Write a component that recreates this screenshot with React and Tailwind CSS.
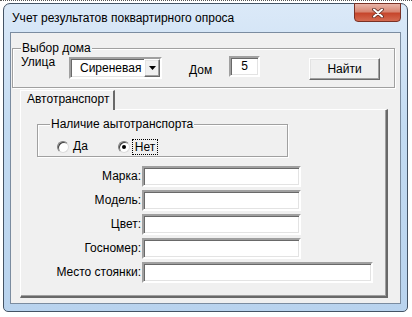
import React from 'react';

const sunken =
  'border-2 border-t-[#a0a0a0] border-l-[#a0a0a0] border-b-white border-r-white shadow-[inset_1px_1px_0_#696969,inset_-1px_-1px_0_#e3e3e3] bg-white';
const raised =
  'border border-t-white border-l-white border-b-[#696969] border-r-[#696969] shadow-[inset_-1px_-1px_0_#a0a0a0,inset_1px_1px_0_#e3e3e3] bg-[#f0f0f0]';
const etched =
  'border border-[#a0a0a0] shadow-[inset_1px_1px_0_white,1px_1px_0_white]';

function Field({ label, wide }) {
  return (
    <div className="flex items-center h-[21px]">
      <span className="w-[121px] text-right pr-px">{label}</span>
      <div className={`${sunken} h-[21px] ${wide ? 'w-[231px]' : 'w-[159px]'}`} />
    </div>
  );
}

function Radio({ checked }) {
  return (
    <div className="w-[12px] h-[12px] rounded-full border border-t-[#7d7d7d] border-l-[#7d7d7d] border-b-[#dcdcdc] border-r-[#dcdcdc] bg-white flex items-center justify-center shadow-[inset_1px_1px_0_#404040]">
      {checked && <div className="w-[4px] h-[4px] rounded-full bg-black" />}
    </div>
  );
}

export default function App() {
  return (
    <div
      className="w-[412px] h-[317px] bg-white border-t border-dotted border-[#555] text-[12px] leading-[15px] text-black"
      style={{ fontFamily: '"Liberation Sans", Arial, sans-serif' }}
    >
      <div className="ml-[3px] mt-[2px] w-[405px] h-[309px] border border-[#445365] rounded-t-[7px] rounded-b-[5px] bg-[linear-gradient(to_bottom,#dbe9f8,#c3dbf2_40%,#b9d3ee)] flex flex-col px-[6px] pb-[7px]">
        {/* title bar */}
        <div className="relative h-[28px] flex items-center pl-[2px] shrink-0">
          <span className="text-[12px] text-black">Учет результатов поквартирного опроса</span>
          <div className="absolute right-0 -top-px w-[47px] h-[19px] rounded-b-[4px] border border-[#7a3125] bg-[linear-gradient(to_bottom,#e9b4a8,#d88672_45%,#c6462c_55%,#d46a50)] flex items-center justify-center">
            <svg width="12" height="10" viewBox="0 0 12 10">
              <path d="M2 1.5 L10 8.5 M10 1.5 L2 8.5" stroke="#5a2a22" strokeWidth="3.6" strokeLinecap="round" />
              <path d="M2 1.5 L10 8.5 M10 1.5 L2 8.5" stroke="white" strokeWidth="2" strokeLinecap="round" />
            </svg>
          </div>
        </div>

        {/* client area */}
        <div className="flex-1 border border-[#7b8ca0] bg-[#f0f0f0] flex flex-col">
          {/* Выбор дома */}
          <div className={`relative ml-px mt-[15px] w-[383px] h-[40px] ${etched} flex items-start`}>
            <span className="absolute -top-[8px] left-[8px] px-px bg-[#f0f0f0]">Выбор дома</span>
            <span className="mt-[6px] ml-[8px] w-[48px]">Улица</span>
            <div className={`${sunken} mt-[8px] w-[93px] h-[22px] flex items-center`}>
              <span className="flex-1 pl-[9px]">Сиреневая</span>
              <div className={`${raised} w-[16px] h-[18px] flex items-center justify-center`}>
                <svg width="7" height="4" viewBox="0 0 7 4">
                  <path d="M0 0 H7 L3.5 4 Z" fill="black" />
                </svg>
              </div>
            </div>
            <span className="mt-[14px] ml-[27px] w-[40px]">Дом</span>
            <div className={`${sunken} mt-[7px] w-[31px] h-[21px] flex items-center justify-center`}>5</div>
            <div className={`${raised} mt-[9px] ml-[49px] w-[71px] h-[22px] flex items-center justify-center`}>
              Найти
            </div>
          </div>

          {/* tab header */}
          <div className="ml-[9px] mt-[2px] relative z-10 -mb-px w-[95px] h-[20px] bg-[#f0f0f0] border-t border-l border-white border-r-2 border-r-[#696969] flex items-start pl-[6px] pt-[1px]">
            Автотранспорт
          </div>

          {/* tab page */}
          <div className="ml-[9px] w-[368px] h-[189px] border-t border-l border-white border-r-2 border-b-2 border-r-[#696969] border-b-[#696969] shadow-[inset_-1px_-1px_0_#a0a0a0] flex flex-col">
            <div className={`relative ml-[16px] mt-[14px] w-[251px] h-[33px] ${etched} flex items-start`}>
              <span className="absolute -top-[8px] left-[12px] px-px bg-[#f0f0f0]">Наличие аытотранспорта</span>
              <div className="ml-[19px] mt-[14px] flex items-center">
                <Radio />
                <span className="ml-[4px]">Да</span>
              </div>
              <div className="ml-[30px] mt-[14px] flex items-center">
                <Radio checked />
                <span className="ml-[2px] px-[2px] border border-dotted border-black leading-[14px]">Нет</span>
              </div>
            </div>

            <div className="mt-[9px] flex flex-col gap-[3px]">
              <Field label="Марка:" />
              <Field label="Модель:" />
              <Field label="Цвет:" />
              <Field label="Госномер:" />
              <Field label="Место стоянки:" wide />
            </div>
          </div>
        </div>
      </div>
    </div>
  );
}
